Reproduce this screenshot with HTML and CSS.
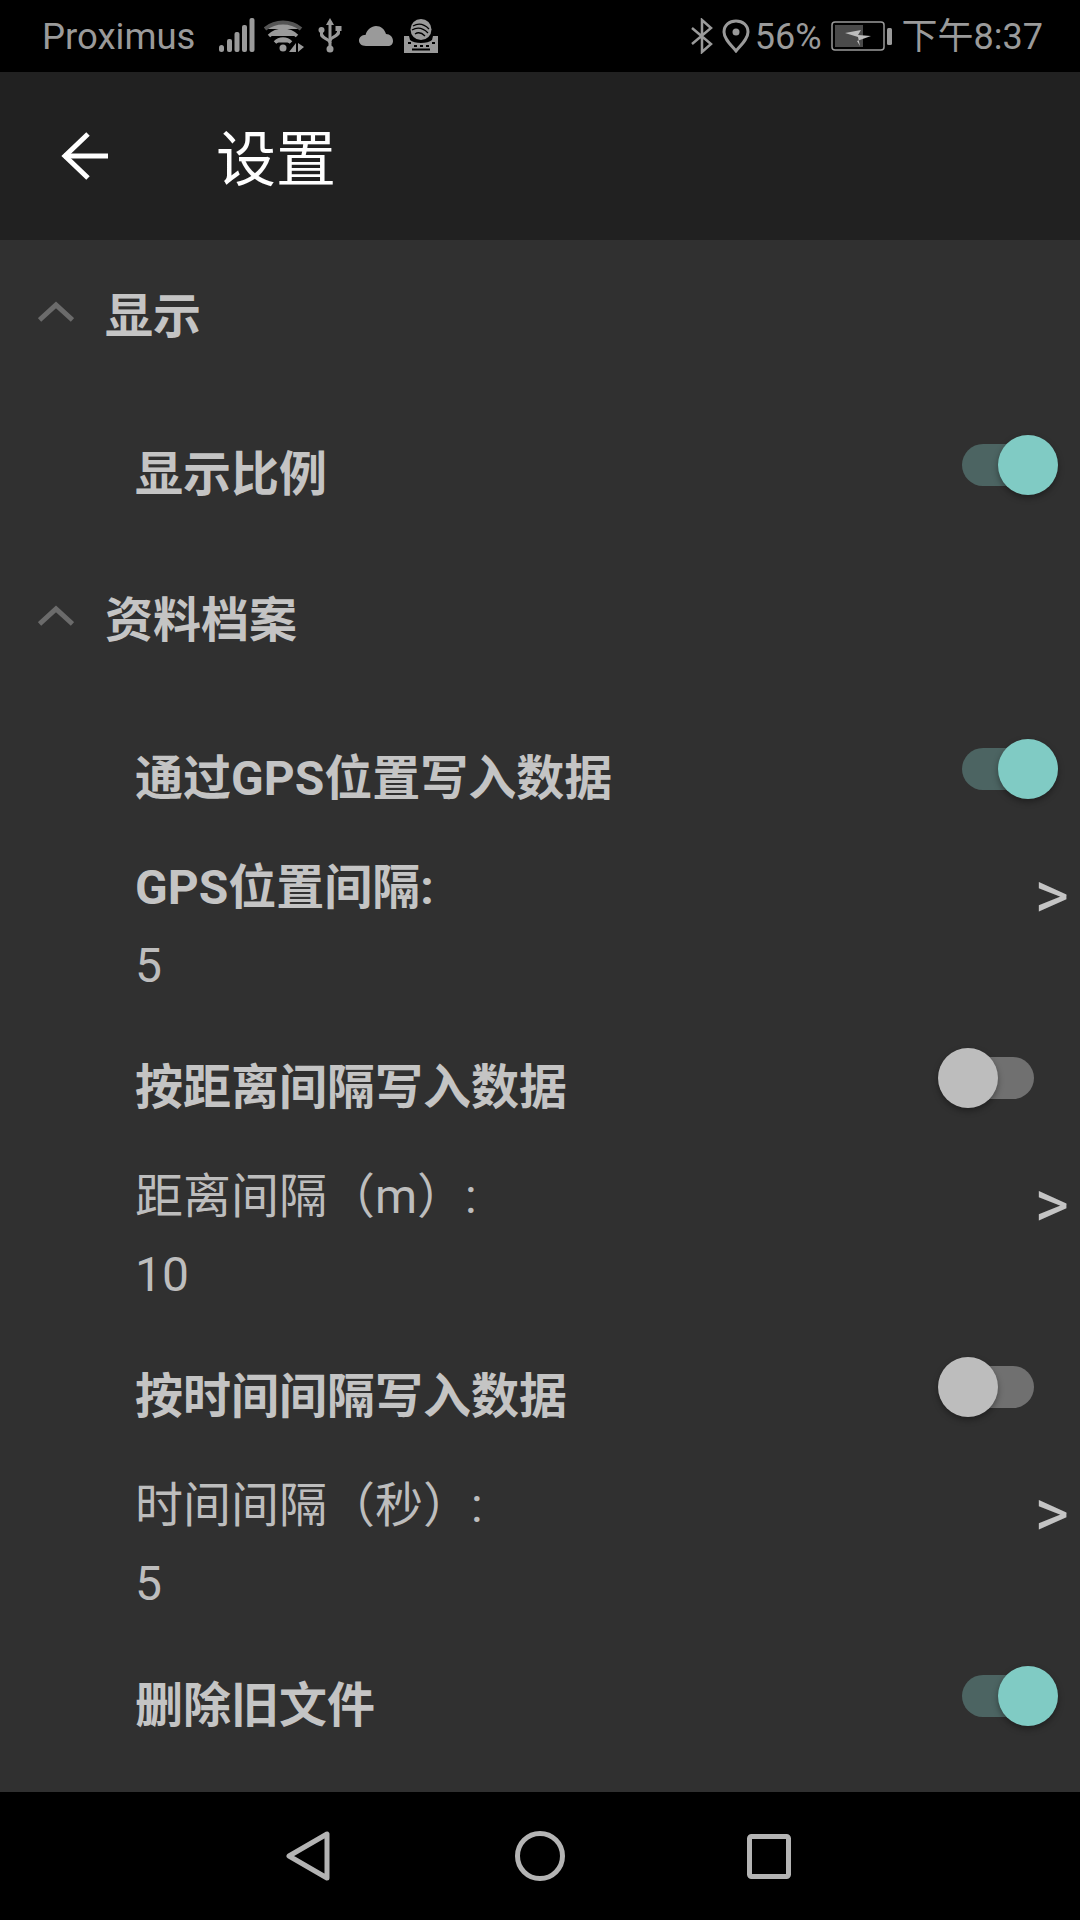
FILE: index.html
```html
<!DOCTYPE html>
<html lang="zh-CN">
<head>
    <meta charset="UTF-8">
    <meta name="viewport" content="width=device-width, initial-scale=1.0">
    <title>设置</title>
    <link rel="stylesheet" href="styles.css">
</head>
<body>
    <div class="statusbar">
        <div class="status-left">
            <span class="carrier">Proximus</span>
            <svg class="ic-signal" width="36" height="36" viewBox="0 0 36 36">
                <rect x="0" y="27" width="5" height="7" rx="2.5"/>
                <rect x="8" y="21" width="5" height="13" rx="2"/>
                <rect x="15.5" y="14" width="5" height="20" rx="2"/>
                <rect x="23" y="7" width="5" height="27" rx="2"/>
                <rect x="30.500" y="0" width="5" height="34" rx="2"/>
            </svg>
            <svg class="ic-wifi" width="40" height="36" viewBox="0 0 40 36" fill="none" stroke="#9a9a9a">
                <path d="M1 11 A28.500 28.500 0 0 1 37 11" stroke="#555" stroke-width="4"/>
                <path d="M5 18 A20 20 0 0 1 33 18" stroke-width="3.500"/>
                <path d="M11 24.500 A11 11 0 0 1 27 24.500" stroke-width="3.500"/>
                <circle cx="19" cy="30" r="3.500" fill="#9a9a9a" stroke="none"/>
                <path d="M32 25 L32 34 L25 34 Z M34 25 L34 34 L40 29 Z" fill="#9a9a9a" stroke="none"/>
            </svg>
            <svg class="ic-usb" width="24" height="36" viewBox="0 0 24 36" fill="none" stroke="#9a9a9a" stroke-width="3">
                <path d="M12 3 L12 31"/>
                <path d="M12 0 L16 7 L8 7 Z" fill="#9a9a9a" stroke="none"/>
                <circle cx="12" cy="31" r="3.500" fill="#9a9a9a" stroke="none"/>
                <path d="M3.500 14 L3.500 17 C3.500 20 12 21 12 25"/>
                <path d="M20.500 12 L20.500 15 C20.500 18 12 19 12 23"/>
                <circle cx="3.500" cy="12" r="3" fill="#9a9a9a" stroke="none"/>
                <rect x="17.500" y="8" width="6" height="5" fill="#9a9a9a" stroke="none"/>
            </svg>
            <svg class="ic-cloud" width="34" height="20" viewBox="0 0 34 20">
                <path d="M7 20 C2 20 0 17 0 14.500 C0 11 3 9 6.500 9 C8 3.500 12.500 0 17 0 C22 0 25.500 3 27 8 C31 8 34 11 34 15 C34 18 32 20 29 20 Z"/>
            </svg>
            <svg class="ic-swift" width="34" height="34" viewBox="0 0 34 34">
                <circle cx="17" cy="10.500" r="10.500"/>
                <path d="M9 7 C14 4 20 5 25 10 M8 11 C13 8 19 9 24 14 M11 15 C14 13 18 14 21 17" fill="none" stroke="#000" stroke-width="1.300"/>
                <path d="M0 17 L5 17 L6 21 C10 25 24 25 28 21 L29 17 L34 17 L34 34 L0 34 Z"/>
                <path d="M4 24 h3 M10 27 h3 M16 27 h3 M22 27 h3 M28 24 h3 M8 30.500 h18" stroke="#000" stroke-width="2"/>
            </svg>
        </div>
        <div class="status-right">
            <svg class="ic-bt" width="22" height="36" viewBox="0 0 22 36" fill="none" stroke="#9a9a9a" stroke-width="2.500">
                <path d="M1 10 L20 26 L11 34 L11 2 L20 10 L1 26"/>
            </svg>
            <svg class="ic-pin" width="28" height="34" viewBox="0 0 28 34" fill="none" stroke="#9a9a9a" stroke-width="3">
                <path d="M14 32 C9 26 2 20 2 13 C2 6 7.500 2 14 2 C20.500 2 26 6 26 13 C26 20 19 26 14 32 Z"/>
                <circle cx="14" cy="13" r="3.500" fill="#9a9a9a" stroke="none"/>
            </svg>
            <span class="percent">56%</span>
            <svg class="ic-battery" width="62" height="30" viewBox="0 0 62 30">
                <rect x="1" y="1" width="52" height="28" rx="3" fill="none" stroke="#9a9a9a" stroke-width="1.500"/>
                <rect x="4" y="4" width="28" height="22" fill="#4a4a4a"/>
                <path d="M14 12 L30 9 L27 14 L40 15 L26 20 L29 25 L27 16 Z" fill="#bdbdbd"/>
                <rect x="56" y="7" width="5" height="17" rx="1.500" fill="#9a9a9a"/>
            </svg>
            <span class="clock">下午8:37</span>
        </div>
    </div>

    <header class="toolbar">
        <svg class="back" width="48" height="48" viewBox="0 0 48 48" fill="none" stroke="#fff" stroke-width="5">
            <path d="M49 24 L4 24"/>
            <path d="M28 2 L5 24 L28 46"/>
        </svg>
        <h1>设置</h1>
    </header>

    <main class="settings">
        <div class="section"><svg class="chevron" width="36" height="22" viewBox="0 0 36 22" fill="none" stroke="#6b6b6b" stroke-width="5"><path d="M1.500 19 L18 4 L34.500 19"/></svg>显示</div>
        <div class="row row-toggle">
            <span class="title">显示比例</span>
            <span class="switch on"><i></i></span>
        </div>

        <div class="section"><svg class="chevron" width="36" height="22" viewBox="0 0 36 22" fill="none" stroke="#6b6b6b" stroke-width="5"><path d="M1.500 19 L18 4 L34.500 19"/></svg>资料档案</div>
        <div class="row row-toggle">
            <span class="title">通过GPS位置写入数据</span>
            <span class="switch on"><i></i></span>
        </div>
        <div class="row row-value">
            <div>
                <div class="title">GPS位置间隔:</div>
                <div class="value">5</div>
            </div>
            <span class="more">&gt;</span>
        </div>
        <div class="row row-toggle">
            <span class="title">按距离间隔写入数据</span>
            <span class="switch"><i></i></span>
        </div>
        <div class="row row-value">
            <div>
                <div class="label">距离间隔（m）:</div>
                <div class="value">10</div>
            </div>
            <span class="more">&gt;</span>
        </div>
        <div class="row row-toggle">
            <span class="title">按时间间隔写入数据</span>
            <span class="switch"><i></i></span>
        </div>
        <div class="row row-value">
            <div>
                <div class="label">时间间隔（秒）:</div>
                <div class="value">5</div>
            </div>
            <span class="more">&gt;</span>
        </div>
        <div class="row row-toggle">
            <span class="title">删除旧文件</span>
            <span class="switch on"><i></i></span>
        </div>
        <div class="row row-value row-last">
            <div>
                <div class="label">保留旧文件（天）:</div>
                <div class="value">7</div>
            </div>
            <span class="more">&gt;</span>
        </div>
    </main>

    <nav class="navbar">
        <svg width="44" height="50" viewBox="0 0 44 50" fill="none" stroke="#b4b4b4" stroke-width="5" stroke-linejoin="round">
            <path d="M41 3 L41 47 L3 25 Z" />
        </svg>
        <svg width="50" height="50" viewBox="0 0 50 50" fill="none" stroke="#b4b4b4" stroke-width="5">
            <circle cx="25" cy="25" r="22.500"/>
        </svg>
        <svg class="nav-recent" width="44" height="45" viewBox="0 0 44 45" fill="none" stroke="#b4b4b4" stroke-width="5" stroke-linejoin="round">
            <rect x="2.500" y="2.500" width="39" height="40" rx="2"/>
        </svg>
    </nav>
</body>
</html>
```

FILE: styles.css
```css
* {
    box-sizing: border-box;
}

body {
    margin: 0;
    width: 1080px;
    height: 1920px;
    display: flex;
    flex-direction: column;
    overflow: hidden;
    background-color: #303030;
    font-family: "Roboto", "Noto Sans CJK SC", sans-serif;
}

.statusbar {
    height: 72px;
    background-color: #000;
    color: #9a9a9a;
    font-size: 36px;
    line-height: 44px;
    display: flex;
    justify-content: space-between;
    align-items: center;
    padding: 0 37px 0 42px;
}

.status-left,
.status-right {
    display: flex;
    align-items: center;
}

.status-left svg {
    fill: #9a9a9a;
}

.carrier {
    margin: 2px 24px 0 0;
    font-size: 36.5px;
}

.ic-wifi {
    margin-left: 9px;
}

.ic-usb {
    margin-left: 14px;
}

.ic-cloud {
    margin-left: 17px;
}

.ic-swift {
    margin-left: 11px;
}

.ic-pin {
    margin-left: 9px;
}

.percent {
    margin: 2px 0 0 5px;
}

.ic-battery {
    margin-left: 9px;
}

.clock {
    margin: 2px 0 0 9px;
}

.toolbar {
    height: 168px;
    background-color: #212121;
    display: flex;
    align-items: center;
    padding-left: 60px;
}

.toolbar h1 {
    margin: 0 0 4px 108px;
    color: #fff;
    font-size: 60px;
    font-weight: 400;
}

.settings {
    flex: 1;
    overflow: hidden;
    color: #c4c4c4;
    font-size: 48px;
    line-height: 60px;
}

.section {
    height: 152px;
    display: flex;
    align-items: center;
    padding: 2px 0 0 38px;
    font-weight: 700;
}

.chevron {
    margin: -10px 31px 0 0;
}

.row {
    display: flex;
    justify-content: space-between;
    align-items: flex-start;
    padding: 0 46px 0 135px;
}

.row-toggle {
    height: 152px;
    padding-top: 53px;
}

.row-value {
    height: 157px;
    padding-top: 10px;
}

.row-last {
    padding-top: 12px;
}

.title {
    font-weight: 700;
}

.label,
.value {
    font-weight: 400;
    color: #bdbdbd;
}

.value {
    margin-top: 18px;
}

.switch {
    position: relative;
    width: 72px;
    height: 42px;
    margin-top: -1px;
    border-radius: 21px;
    background-color: #707070;
}

.switch i {
    position: absolute;
    top: -9px;
    left: -24px;
    width: 60px;
    height: 60px;
    border-radius: 50%;
    background-color: #bdbdbd;
    box-shadow: 0 3px 6px rgba(0, 0, 0, 0.35);
}

.switch.on {
    background-color: #4c6462;
}

.switch.on i {
    left: 36px;
    background-color: #80cbc4;
}

.more {
    font-size: 66px;
    margin: 8px -35px 0 0;
}

.navbar {
    height: 128px;
    background-color: #000;
    display: flex;
    align-items: center;
    justify-content: center;
    gap: 185px;
    padding-right: 3px;
}

.nav-recent {
    margin-left: -3px;
}
```
